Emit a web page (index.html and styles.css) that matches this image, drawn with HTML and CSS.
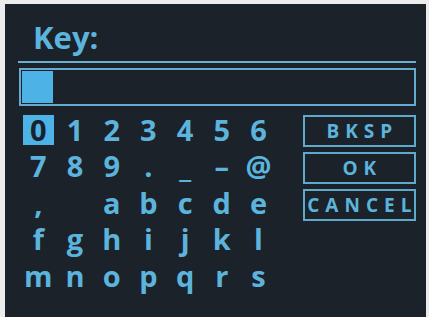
FILE: index.html
```html
<!DOCTYPE html>
<html>
<head>
<meta charset="utf-8">
<link rel="stylesheet" href="styles.css">
</head>
<body>
<div class="screen">
  <div class="title">Key:</div>
  <div class="rule"></div>
  <div class="input"><div class="cursor"></div></div>
  <div class="board">
    <div class="keys">
      <span class="key sel">0</span><span class="key">1</span><span class="key">2</span><span class="key">3</span><span class="key">4</span><span class="key">5</span><span class="key">6</span>
      <span class="key">7</span><span class="key">8</span><span class="key">9</span><span class="key">.</span><span class="key">_</span><span class="key">–</span><span class="key">@</span>
      <span class="key">,</span><span class="key"> </span><span class="key">a</span><span class="key">b</span><span class="key">c</span><span class="key">d</span><span class="key">e</span>
      <span class="key">f</span><span class="key">g</span><span class="key">h</span><span class="key">i</span><span class="key">j</span><span class="key">k</span><span class="key">l</span>
      <span class="key">m</span><span class="key">n</span><span class="key">o</span><span class="key">p</span><span class="key">q</span><span class="key">r</span><span class="key">s</span>
    </div>
    <div class="actions">
      <div class="btn">BKSP</div>
      <div class="btn">OK</div>
      <div class="btn">CANCEL</div>
    </div>
  </div>
</div>
</body>
</html>
```
FILE: styles.css
```css
html, body {
  margin: 0;
  padding: 0;
  background: #ececec;
}
body {
  width: 429px;
  height: 317px;
  overflow: hidden;
}
.screen {
  margin: 4px 3px 0 5px;
  height: 313px;
  background: #1b2229;
  box-sizing: border-box;
  padding: 15px 10px 0 13px;
  display: flex;
  flex-direction: column;
  font-family: "Open Sans", "DejaVu Sans", sans-serif;
  font-weight: 700;
  color: #5cb3dc;
}
.title {
  font-size: 31px;
  line-height: 36px;
  height: 36px;
  padding-left: 15px;
  margin-bottom: 6px;
}
.rule {
  height: 2px;
  background: #6aaed0;
}
.input {
  margin-top: 5px;
  height: 38px;
  box-sizing: border-box;
  border: 2px solid #65abcf;
  padding: 1px;
  margin-left: 1px;
}
.cursor {
  width: 31px;
  height: 32px;
  background: #4db2e6;
}
.board {
  display: flex;
  margin-top: 5.5px;
}
.keys {
  margin-left: 2px;
  display: grid;
  grid-template-columns: repeat(7, 36.7px);
  grid-auto-rows: 36.6px;
  font-size: 29px;
  line-height: 36.6px;
}
.key {
  display: flex;
  justify-content: center;
  white-space: pre;
}
.key.sel {
  position: relative;
  z-index: 0;
  color: #17222c;
}
.key.sel::before {
  content: "";
  position: absolute;
  left: 3px;
  top: 3.5px;
  width: 31px;
  height: 30px;
  background: #4db2e6;
  z-index: -1;
}
.actions {
  margin-left: 26px;
  margin-top: 3.5px;
  width: 113px;
  display: flex;
  flex-direction: column;
  gap: 5px;
}
.btn {
  height: 32px;
  box-sizing: border-box;
  border: 2px solid #5fa9cc;
  display: flex;
  align-items: center;
  justify-content: center;
  font-size: 19px;
  letter-spacing: 6px;
  padding-left: 6px;
  color: #5cb3dc;
}
```
